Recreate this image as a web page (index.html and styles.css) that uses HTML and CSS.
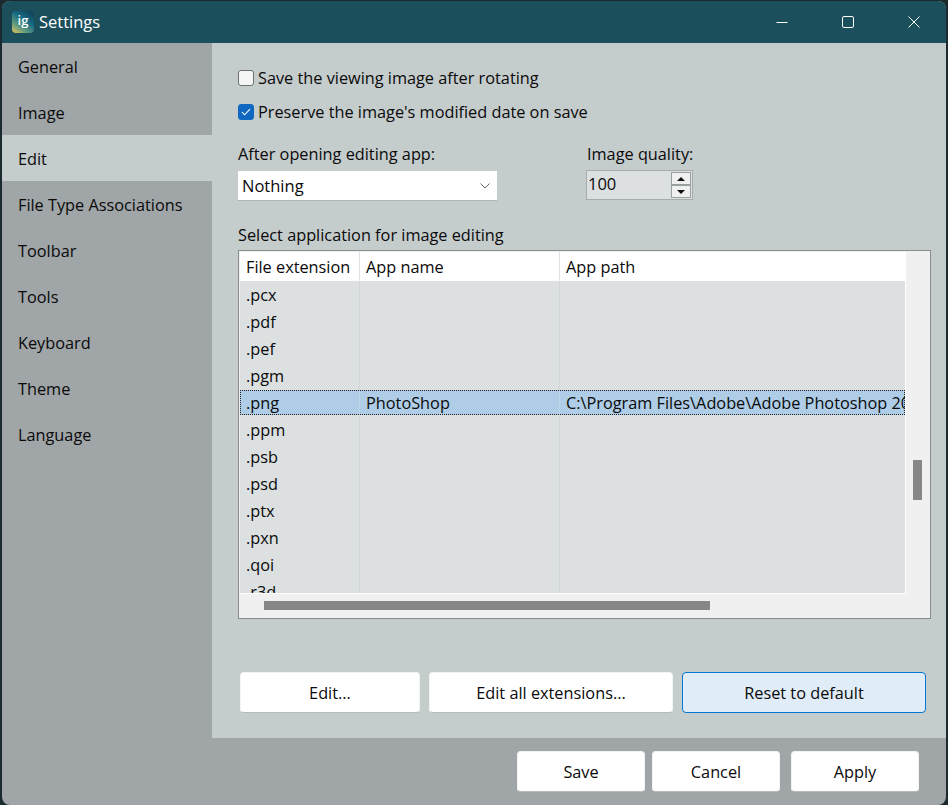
FILE: index.html
```html
<!DOCTYPE html>
<html lang="en">
<head>
<meta charset="utf-8">
<title>Settings</title>
<link rel="stylesheet" href="styles.css">
</head>
<body>
<div class="window">
  <header class="titlebar">
    <div class="app-icon"><span>ig</span></div>
    <div class="title">Settings</div>
    <div class="controls">
      <svg class="ctl" width="12" height="12" viewBox="0 0 12 12"><path d="M0.5 6.5H11.5" stroke="#fff" fill="none"/></svg>
      <svg class="ctl" width="12" height="12" viewBox="0 0 12 12"><rect x="0.5" y="0.5" width="11" height="11" rx="1.5" stroke="#fff" fill="none"/></svg>
      <svg class="ctl" width="12" height="12" viewBox="0 0 12 12"><path d="M0.5 0.5L11.5 11.5M11.5 0.5L0.5 11.5" stroke="#fff" fill="none"/></svg>
    </div>
  </header>
  <div class="main">
    <nav class="sidebar">
      <div class="nav-item">General</div>
      <div class="nav-item">Image</div>
      <div class="nav-item active">Edit</div>
      <div class="nav-item">File Type Associations</div>
      <div class="nav-item">Toolbar</div>
      <div class="nav-item">Tools</div>
      <div class="nav-item">Keyboard</div>
      <div class="nav-item">Theme</div>
      <div class="nav-item">Language</div>
    </nav>
    <main class="content">
      <div class="check-row"><span class="box"></span><span>Save the viewing image after rotating</span></div>
      <div class="check-row second"><span class="box on"><svg width="10" height="8" viewBox="0 0 10 8"><path d="M1 4.2L3.6 6.8L9 1.2" stroke="#fff" stroke-width="1.1" fill="none"/></svg></span><span>Preserve the image's modified date on save</span></div>
      <div class="fields">
        <div class="field-a">
          <div class="label">After opening editing app:</div>
          <div class="select"><span>Nothing</span><svg width="10" height="6" viewBox="0 0 10 6"><path d="M0.5 0.5L5 5L9.5 0.5" stroke="#666" fill="none"/></svg></div>
        </div>
        <div class="field-b">
          <div class="label">Image quality:</div>
          <div class="spin">
            <span class="spin-val">100</span>
            <div class="spin-btns">
              <div class="spin-btn"><svg width="8" height="4" viewBox="0 0 8 4"><path d="M4 0L8 4H0Z" fill="#111"/></svg></div>
              <div class="spin-btn"><svg width="8" height="4" viewBox="0 0 8 4"><path d="M0 0H8L4 4Z" fill="#111"/></svg></div>
            </div>
          </div>
        </div>
      </div>
      <div class="label list-label">Select application for image editing</div>
      <div class="table">
        <div class="table-top">
          <div class="viewport">
            <div class="row head"><div class="c1">File extension</div><div class="c2">App name</div><div class="c3">App path</div></div>
            <div class="rows">
              <div class="row"><div class="c1">.pcx</div><div class="c2"></div><div class="c3"></div></div>
              <div class="row"><div class="c1">.pdf</div><div class="c2"></div><div class="c3"></div></div>
              <div class="row"><div class="c1">.pef</div><div class="c2"></div><div class="c3"></div></div>
              <div class="row"><div class="c1">.pgm</div><div class="c2"></div><div class="c3"></div></div>
              <div class="row selected"><div class="c1">.png</div><div class="c2">PhotoShop</div><div class="c3">C:\Program Files\Adobe\Adobe Photoshop 2024\Photoshop.exe</div></div>
              <div class="row"><div class="c1">.ppm</div><div class="c2"></div><div class="c3"></div></div>
              <div class="row"><div class="c1">.psb</div><div class="c2"></div><div class="c3"></div></div>
              <div class="row"><div class="c1">.psd</div><div class="c2"></div><div class="c3"></div></div>
              <div class="row"><div class="c1">.ptx</div><div class="c2"></div><div class="c3"></div></div>
              <div class="row"><div class="c1">.pxn</div><div class="c2"></div><div class="c3"></div></div>
              <div class="row"><div class="c1">.qoi</div><div class="c2"></div><div class="c3"></div></div>
              <div class="row"><div class="c1">.r3d</div><div class="c2"></div><div class="c3"></div></div>
            </div>
          </div>
          <div class="vscroll"><div class="vthumb"></div></div>
        </div>
        <div class="hscroll"><div class="hthumb"></div></div>
      </div>
      <div class="actions">
        <button class="btn b-edit">Edit...</button>
        <button class="btn b-all">Edit all extensions...</button>
        <button class="btn b-reset">Reset to default</button>
      </div>
    </main>
  </div>
  <footer class="footer">
    <button class="btn f-btn">Save</button>
    <button class="btn f-btn">Cancel</button>
    <button class="btn f-btn f-last">Apply</button>
  </footer>
</div>
</body>
</html>
```
FILE: styles.css
```css
* { box-sizing: border-box; }
html, body { margin: 0; height: 100%; }
body {
  background: #1b2a2e;
  font-family: "Open Sans", "Noto Sans", sans-serif;
  font-size: 16.3px;
  color: #0a0a0a;
  overflow: hidden;
}
.window {
  margin: 1px 2px 0 2px;
  height: 804px;
  display: flex;
  flex-direction: column;
  border-radius: 8px;
  overflow: hidden;
  background: #a0a5a7;
}
.titlebar {
  height: 42px;
  flex: none;
  background: #1c4f5c;
  display: flex;
  align-items: center;
  padding-left: 10px;
  color: #fff;
}
.app-icon {
  width: 22px;
  height: 22px;
  border-radius: 4px;
  background: linear-gradient(35deg, #e6c65c 0%, #5f9a80 30%, #156a85 60%, #12394f 100%);
  display: flex;
  justify-content: center;
  color: #fff;
  font-weight: 600;
  font-size: 13px;
  line-height: 18px;
}
.title { margin-left: 5px; font-size: 16.5px; padding-bottom: 2px; }
.controls {
  margin-left: auto;
  display: flex;
  align-items: center;
  gap: 54px;
  padding-right: 26px;
}
.main { flex: 1; display: flex; min-height: 0; }
.sidebar { width: 210px; flex: none; }
.nav-item {
  height: 46px;
  display: flex;
  align-items: center;
  padding: 2px 0 0 16px;
}
.nav-item.active { background: #c5cccc; }
.content {
  flex: 1;
  background: #c5cccc;
  padding: 24px 0 0 26px;
}
.check-row {
  display: flex;
  align-items: center;
  gap: 4px;
  height: 22px;
}
.check-row.second { margin-top: 12px; }
.box {
  width: 16px;
  height: 16px;
  border: 1px solid #6e7072;
  border-radius: 3px;
  background: #f4f5f5;
  display: flex;
  align-items: center;
  justify-content: center;
}
.box.on { background: #0f67c0; border-color: #0f67c0; }
.fields { display: flex; margin-top: 20px; }
.field-a { width: 349px; }
.label { height: 22px; line-height: 22px; }
.select {
  width: 259px;
  height: 30px;
  margin-top: 6px;
  background: #fff;
  border-bottom: 1px solid #aeb3b4;
  display: flex;
  align-items: center;
  justify-content: space-between;
  padding: 0 7px 0 4px;
  font-size: 16.5px;
}
.spin {
  width: 107px;
  height: 30px;
  margin-top: 5px;
  margin-left: -1px;
  background: #dce0e0;
  border: 1px solid #a6abad;
  display: flex;
  align-items: center;
  justify-content: space-between;
  padding: 0 1px 0 1px;
  font-size: 16.5px;
}
.spin-val { padding-bottom: 4px; }
.spin-btns { display: flex; flex-direction: column; width: 20px; }
.spin-btn {
  height: 13px;
  background: #f0f0f0;
  border: 1px solid #9a9fa1;
  display: flex;
  align-items: center;
  justify-content: center;
}
.list-label { margin-top: 23px; }
.table {
  width: 693px;
  height: 369px;
  margin-top: 4px;
  border: 1px solid #868c90;
  background: #f0f0f0;
  padding: 1px 0 0 1px;
  display: flex;
  flex-direction: column;
}
.table-top { display: flex; height: 342px; }
.viewport {
  width: 666px;
  height: 342px;
  overflow: hidden;
  border-right: 1px solid #fff;
  border-bottom: 1px solid #fff;
  background: #dce0e0;
}
.row {
  display: flex;
  height: 27px;
  line-height: 27px;
  white-space: nowrap;
}
.row > div { overflow: hidden; padding-left: 6px; border-right: 1px solid #d0d5da; }
.c1 { width: 120px; flex: none; }
.c2 { width: 200px; flex: none; }
.c3 { width: 345px; flex: none; }
.row > .c3 { border-right: 0; }
.head { height: 29px; line-height: 30px; background: #fff; }
.head > div { border-right-color: #dde2e7; }
.rows { padding-top: 1px; }
.selected {
  height: 25px;
  margin-bottom: 2px;
  background: #afcde6;
  outline: 1px dotted #222;
  outline-offset: -1px;
}
.row.selected > div { border-right-color: #bdd3e6; }
.vscroll { flex: 1; position: relative; }
.vthumb {
  position: absolute;
  left: 7px;
  top: 208px;
  width: 9px;
  height: 40px;
  background: #868686;
}
.hscroll { flex: 1; position: relative; }
.hthumb {
  position: absolute;
  left: 24px;
  top: 7px;
  width: 446px;
  height: 9px;
  background: #868686;
}
.btn {
  font: inherit;
  color: #0a0a0a;
  background: #fff;
  border: 1px solid #f2f3f3;
  border-bottom-color: #b6babb;
  border-radius: 4px;
  padding: 0;
}
.actions { display: flex; margin: 53px 0 0 2px; gap: 9px; }
.actions .btn { height: 41px; }
.b-edit { width: 180px; }
.b-all { width: 244px; }
.actions .b-reset { width: 244px; background: #e0edf8; border: 1px solid #0078d4; }
.footer {
  height: 67px;
  flex: none;
  display: flex;
  justify-content: flex-end;
  gap: 7px;
  padding: 13px 27px 0 0;
}
.f-btn { width: 128px; height: 41px; }
.f-last { margin-left: 4px; }
```
